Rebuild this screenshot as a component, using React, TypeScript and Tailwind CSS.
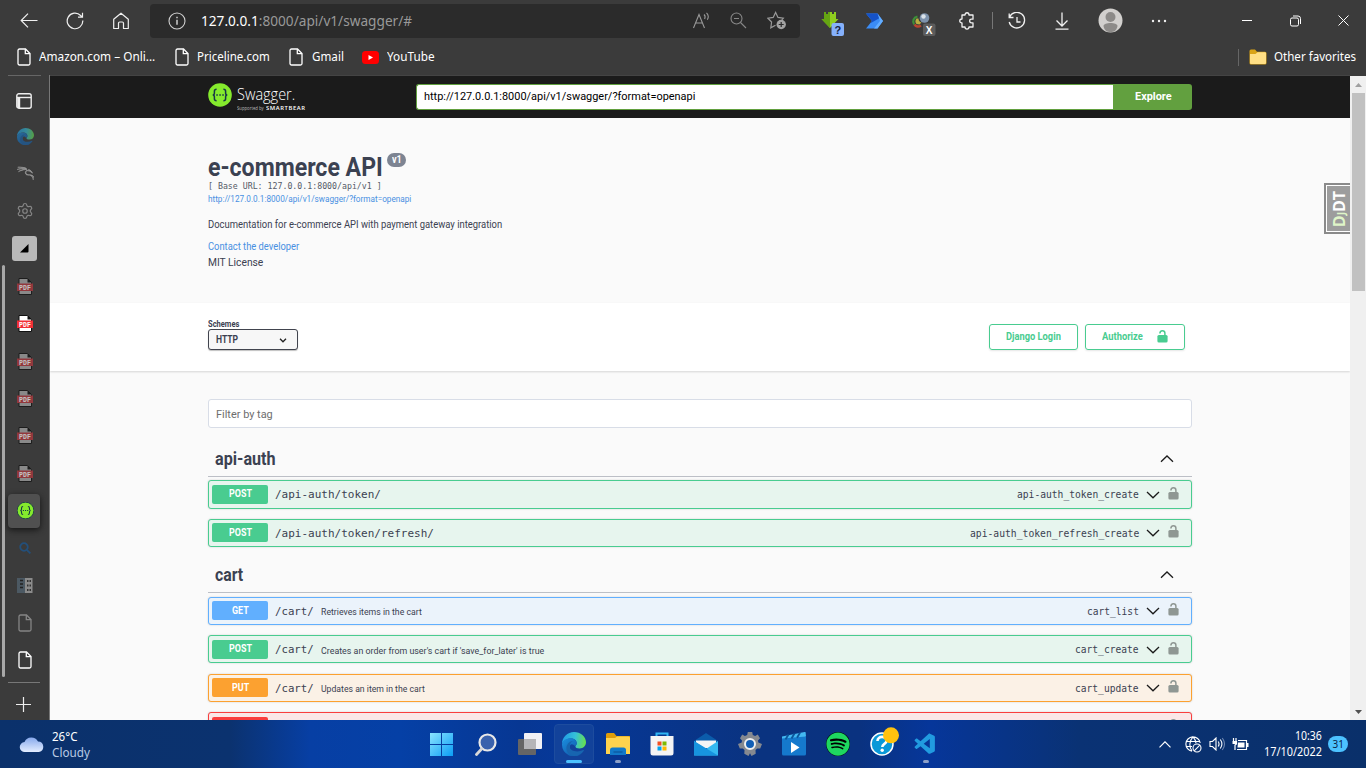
import { useLayoutEffect, useRef, type ReactNode } from "react";
import { FaSpotify } from "react-icons/fa";
import { SiKalilinux } from "react-icons/si";
import { VscVscode } from "react-icons/vsc";
import { Settings } from "lucide-react";

/* Single line of text that is condensed or widened to a given width. */
function Fit({ w, className = "", children }: { w: number; className?: string; children: ReactNode }) {
  const ref = useRef<HTMLSpanElement>(null);
  useLayoutEffect(() => {
    const el = ref.current;
    if (el && el.offsetWidth) el.style.transform = `scaleX(${w / el.offsetWidth})`;
  }, [w]);
  return (
    <span className={`block shrink-0 whitespace-nowrap ${className}`} style={{ width: w }}>
      <span ref={ref} className="inline-block origin-left align-top">{children}</span>
    </span>
  );
}

const FileIcon = ({ className = "" }: { className?: string }) => (
  <svg className={`shrink-0 ${className}`} width="14" height="18" viewBox="0 0 14 18" fill="none" stroke="currentColor" strokeWidth="1.3">
    <path d="M3 1h5.5L13 5.5V15.500a1.500 1.500 0 0 1-1.500 1.500H2.500a1.500 1.500 0 0 1-1.500-1.500V2.500a1.500 1.500 0 0 1 1.500-1.500Z" />
    <path d="M8.3 1.2V5.7H13" />
  </svg>
);

const SwaggerMark = ({ size, rim = "none" }: { size: number; rim?: string }) => (
  <svg className="shrink-0" width={size} height={size} viewBox="0 0 24 24">
    <circle cx="12" cy="12" r="11.8" fill="#85ea2d" stroke={rim} strokeWidth="1.2" />
    <g fill="none" stroke="#173647" strokeWidth="1.5">
      <path d="M8.6 6.3c-2 0-2.200.6-2.200 2v1.700c0 1.300-.5 2-1.700 2 1.200 0 1.700.7 1.700 2v1.700c0 1.400.2 2 2.200 2M15.400 6.300c2 0 2.200.6 2.200 2v1.700c0 1.300.5 2 1.700 2-1.200 0-1.700.7-1.700 2v1.700c0 1.400-.2 2-2.200 2" />
      <path d="M8.300 12h1.500M11.300 12h1.500M14.300 12h1.500" />
    </g>
  </svg>
);

const EdgeLogo = ({ size, id, className = "" }: { size: number; id: string; className?: string }) => (
  <svg className={className} width={size} height={size} viewBox="0 0 24 24">
    <defs>
      <linearGradient id={`${id}a`} x1="0" y1=".3" x2="1" y2=".4">
        <stop offset="0" stopColor="#1f9be6" />
        <stop offset=".55" stopColor="#35c1d8" />
        <stop offset="1" stopColor="#66e04f" />
      </linearGradient>
      <linearGradient id={`${id}b`} x1="0" y1="0" x2="1" y2="1">
        <stop offset="0" stopColor="#1b8fe0" />
        <stop offset="1" stopColor="#0f4f9e" />
      </linearGradient>
    </defs>
    <path d="M0 12C0 5 5.500 0 12 0s12 4.600 12 10.200c0 3.600-2.800 6.200-6.300 6.200-2.800 0-4.300-1-4.300-2 0-.8 1.300-1.300 1.300-3.200C14.700 8.500 12.300 6.500 9 6.500 4.500 6.500 1 9 0 12Z" fill={`url(#${id}a)`} />
    <path d="M0 12c.8-3.400 4-5.700 8.300-5.700 3.600 0 6.400 2.200 6.400 5 0 1.800-1.300 2.200-1.300 3.100-3-3.400-5.600-2.800-5.600.6 0 4.200 3.800 7.400 8.400 7.400 1.300 0 2.500-.3 3.500-.8A12 12 0 0 1 0 12Z" fill={`url(#${id}b)`} />
    <path d="M7.800 15c0-3 1.600-5.400 3.600-5.900-3.500-.3-7 2.900-7 7.400 0 4 3.600 7.300 8 7.500 3.700-.1 7.400-2 9.400-5.300.3-.6-.1-.9-.7-.6C15.500 20.900 7.800 19 7.800 15Z" fill="#1765b0" />
  </svg>
);

const PdfIcon = ({ active = false }: { active?: boolean }) => (
  <svg className={active ? "" : "opacity-70"} width="16" height="17" viewBox="0 0 16 17">
    <path d="M2 .5h8.500L14.500 4.500V16.500H2Z" fill={active ? "#fff" : "#aaa"} stroke="#111" />
    <path d="M10.500.5V4.500h4Z" fill="#111" />
    <rect y="5.500" width="16" height="7.500" fill={active ? "#f22f36" : "#b8383e"} />
    <text x="8" y="11.600" textAnchor="middle" fontFamily="Liberation Mono, monospace" fontWeight="700" fontSize="6.500" fill="#fff" textLength="12">PDF</text>
  </svg>
);

const Lock = ({ color }: { color: string }) => (
  <svg className="shrink-0" width="11" height="13" viewBox="0 0 11 13">
    <path d="M2.900 3.600C2.900 1.700 4 .8 5.400.8S7.900 1.700 7.900 3.300V6" fill="none" stroke={color} strokeWidth="1.500" />
    <rect x=".4" y="5" width="10.200" height="7.600" rx="1.500" fill={color} />
  </svg>
);

const Chevron = ({ up = false }: { up?: boolean }) => (
  <svg className="shrink-0" width="14" height="8" viewBox="0 0 14 8" fill="none" stroke="#1b1b1b" strokeWidth="1.300">
    <path d={up ? "M1 6.800 7 1 13 6.800" : "M1 1 7 6.800 13 1"} />
  </svg>
);

function Toolbar() {
  return (
    <div className="flex h-[41px] items-center text-[#f0f0f0]">
      <svg className="ml-5 shrink-0" width="18" height="18" viewBox="0 0 18 18" fill="none" stroke="currentColor" strokeWidth="1.200">
        <path d="M17.500 8.500H1.200M8 1.700 1.200 8.500 8 15.300" />
      </svg>
      <svg className="ml-[28px] shrink-0" width="18" height="18" viewBox="0 0 18 18" fill="none" stroke="currentColor" strokeWidth="1.200">
        <path d="M16.800 8.500A7.800 7.800 0 1 1 14.600 3.500L16.200 5M16.500.8V5.200H12" />
      </svg>
      <svg className="ml-[28px] shrink-0" width="18" height="18" viewBox="0 0 18 18" fill="none" stroke="currentColor" strokeWidth="1.200" strokeLinejoin="round">
        <path d="M1.700 7.300 9 1.200l7.300 6.100v9.200H11.500V11.200A1.200 1.200 0 0 0 10.300 10H7.700a1.200 1.200 0 0 0-1.200 1.200v5.300H1.700Z" />
      </svg>
      <div className="ml-[20px] flex h-[34px] w-[650px] shrink-0 items-center rounded-[4px] bg-[#2b2b2b] pl-[18px]">
        <svg className="shrink-0" width="18" height="18" viewBox="0 0 18 18" fill="none" stroke="#d0d0d0" strokeWidth="1.100">
          <circle cx="9" cy="9" r="8" />
          <path d="M9 7.800v5M9 4.800v1.500" strokeWidth="1.500" />
        </svg>
        <Fit w={211} className="mb-px ml-[15px] text-[15px] leading-[20px] text-[#999]">
          <span className="text-white">127.0.0.1</span>:8000/api/v1/swagger/#
        </Fit>
        <svg className="ml-[280px] shrink-0" width="19" height="18" viewBox="0 0 19 18" fill="none" stroke="#999" strokeWidth="1.100">
          <path d="M1.500 16 7 2.500 12.500 16M3.500 11h7M12 2.500c1.300 1.200 1.300 3 .6 4.500M14.500.8c2 2 2 5 .8 7" />
        </svg>
        <svg className="ml-[19px] shrink-0" width="17" height="17" viewBox="0 0 17 17" fill="none" stroke="#888" strokeWidth="1.100">
          <circle cx="6.500" cy="6.500" r="5.500" /><path d="M10.500 10.500 16 16M4 6.500h5" />
        </svg>
        <svg className="ml-[20px] shrink-0" width="20" height="19" viewBox="0 0 20 19" fill="none" stroke="#999" strokeWidth="1.200">
          <path d="M8.500 14.200 3.800 16.800 4.600 11 .9 7.200l5.300-.8L8.600 1.400 11 6.400l5.300.8-1.500 1.600" />
          <circle cx="14.200" cy="13.500" r="4.700" fill="#a3a3a3" stroke="none" />
          <path d="M14.200 11v5M11.700 13.500h5" stroke="#2b2b2b" />
        </svg>
      </div>
      <svg className="mt-[6px] ml-[20px] shrink-0" width="25" height="26" viewBox="0 0 25 26">
        <path d="M4 1h2v2h2V1h4v2h2V1h2v7h2.500L10 17 1.500 8H4Z" fill="#8fce1f" />
        <path d="M4 1h2v2h2V1h2v16L1.500 8H4Z" fill="#65a512" />
        <rect x="11.500" y="12" width="12.500" height="13" rx="2" fill="#86b1fb" />
        <text x="17.800" y="22.500" textAnchor="middle" fontSize="11" fontWeight="700" fontFamily="Liberation Sans, sans-serif" fill="#15233f">?</text>
      </svg>
      <svg className="ml-[20px] shrink-0" width="20" height="16" viewBox="0 0 20 16">
        <path d="M1 .5h11.500L18 8l-5.500 7.500H1L7 8Z" fill="#3b8cf5" />
        <path d="M1 .5h11.500L15.500 4.500 5.500 10.300 7 8Z" fill="#1552c8" />
        <path d="M12.500.5 18 8l-5.500 7.500H9L15 8Z" fill="#63adff" />
      </svg>
      <svg className="mt-[6px] ml-[26px] shrink-0" width="26" height="26" viewBox="0 0 26 26">
        <circle cx="13.500" cy="7" r="4.800" fill="#7d93ad" /><circle cx="12.500" cy="5.500" r="2.200" fill="#dbe3ea" />
        <path d="M6.500 5.500C2.500 6.500 1 10 3.200 13.500" stroke="#3d8f38" strokeWidth="2.200" fill="none" />
        <path d="M3.500 13.500c1.500 2.200 4 2.800 6.500 1" stroke="#b8452f" strokeWidth="2.400" fill="none" />
        <path d="M5.500 7.500c-1.500 2-1.500 4 0 5.500l3 .5 2-2c-2-.5-3-2-3-4Z" fill="#b9ae40" />
        <rect x="12" y="12.500" width="12.500" height="12.500" rx="2" fill="#5c5c5c" />
        <text x="18.200" y="22.500" textAnchor="middle" fontSize="10" fontWeight="700" fontFamily="Liberation Sans, sans-serif" fill="#fff">X</text>
      </svg>
      <svg className="ml-[21px] shrink-0" width="18" height="18" viewBox="0 0 18 18" fill="none" stroke="currentColor" strokeWidth="1.300" strokeLinejoin="round">
        <path d="M4 3h3c0-3 4-3 4 0h4v4.200h-1.500c-2.500 0-2.500 3.600 0 3.600H15V15h-4c0 2.800-4 2.800-4 0H4v-4C1 11 1 7 4 7Z" />
      </svg>
      <div className="ml-[16px] h-[17px] w-px bg-[#777]" />
      <svg className="ml-[15px] shrink-0" width="18" height="18" viewBox="0 0 18 18" fill="none" stroke="currentColor" strokeWidth="1.300">
        <path d="M1.200 1.500V5.500H5.500M1.500 5.300A7.800 7.800 0 1 1 1.200 10M9 5v5h3.500" />
      </svg>
      <svg className="ml-[28px] shrink-0" width="16" height="18" viewBox="0 0 16 18" fill="none" stroke="currentColor" strokeWidth="1.300">
        <path d="M8 .5v13M2.500 8.500 8 14l5.500-5.500M1.500 17.200h13" />
      </svg>
      <svg className="ml-[28px] shrink-0" width="25" height="25" viewBox="0 0 25 25">
        <circle cx="12.500" cy="12.500" r="12" fill="#d2d0ce" /><circle cx="12.500" cy="9" r="5" fill="#8d8b89" />
        <path d="M5.500 18c0-4 14-4 14 0-1 5-3.500 6-7 6s-6-1-7-6Z" fill="#8d8b89" />
      </svg>
      <svg className="ml-[28px] shrink-0" width="16" height="4" viewBox="0 0 16 4" fill="currentColor">
        <circle cx="2" cy="2" r="1.200" /><circle cx="8" cy="2" r="1.200" /><circle cx="14" cy="2" r="1.200" />
      </svg>
      <div className="ml-[75px] h-px w-[10px] bg-white" />
      <svg className="ml-[38px] shrink-0" width="11" height="12" viewBox="0 0 11 12" fill="none" stroke="#fff">
        <rect x=".5" y="3" width="8" height="8" rx="1.500" /><path d="M3 1h5a2.500 2.500 0 0 1 2.500 2.500V9" />
      </svg>
      <svg className="ml-[37px] shrink-0" width="11" height="11" viewBox="0 0 11 11" stroke="#fff"><path d="m.5.5 10 10m0-10-10 10" /></svg>
    </div>
  );
}

function Bookmarks() {
  return (
    <div className="flex h-[34px] items-center pb-[2px] text-[12px] leading-[16px] text-white">
      <FileIcon className="ml-[17px]" />
      <Fit w={116} className="ml-[8px]">Amazon.com – Onli...</Fit>
      <FileIcon className="ml-[20px]" />
      <Fit w={73} className="ml-[8px]">Priceline.com</Fit>
      <FileIcon className="ml-[19px]" />
      <Fit w={32} className="ml-[9px]">Gmail</Fit>
      <svg className="ml-[18px] shrink-0" width="17" height="13" viewBox="0 0 17 13"><rect width="17" height="13" rx="3.500" fill="#f00" /><path d="m6.500 4 4.500 2.500L6.500 9Z" fill="#fff" /></svg>
      <Fit w={48} className="ml-[8px]">YouTube</Fit>
      <div className="ml-auto h-[17px] w-px bg-[#666]" />
      <svg className="ml-[10px] shrink-0" width="18" height="16" viewBox="0 0 18 16">
        <path d="M.5 2A1.500 1.500 0 0 1 2 .5h4L8 2.800h8A1.500 1.500 0 0 1 17.500 4.300V14a1.500 1.500 0 0 1-1.500 1.500H2A1.500 1.500 0 0 1 .5 14Z" fill="#d9a316" />
        <path d="M1 5h5.500L8.500 3.300H16a1 1 0 0 1 1 1V14a1 1 0 0 1-1 1H2a1 1 0 0 1-1-1Z" fill="#ffdf85" />
      </svg>
      <Fit w={82} className="mr-[10px] ml-[7px]">Other favorites</Fit>
    </div>
  );
}

const Tab = ({ children }: { children: ReactNode }) => (
  <div className="flex h-[37.43px] shrink-0 items-center justify-center pl-px">{children}</div>
);

function Sidebar() {
  return (
    <div className="relative flex w-[50px] shrink-0 flex-col border-r border-[#777] bg-[#3b3b3b] text-white">
      <div className="ml-2 h-px w-[33px] shrink-0 bg-[#666]" />
      <div className="flex h-[41.8px] shrink-0 items-center justify-center pt-[8px] pr-px">
        <svg width="16" height="16" viewBox="0 0 16 16" fill="none" stroke="#eee" strokeWidth="1.400">
          <rect x=".8" y=".8" width="14.400" height="14.400" rx="2" /><path d="M1 4.500h14" /><path d="M2.700 5v10" strokeWidth="3" />
        </svg>
      </div>
      <Tab><EdgeLogo size={17} id="side" className="opacity-60" /></Tab>
      <Tab><SiKalilinux size={17} color="#999" stroke="#999" strokeWidth={0.9} /></Tab>
      <Tab><Settings size={18} strokeWidth={1.600} color="#858585" /></Tab>
      <Tab>
        <div className="mr-[2px] flex size-[25px] items-center justify-center rounded-[3px] bg-[#b9b9b9]">
          <svg width="9" height="9" viewBox="0 0 9 9"><path d="M8.500 0v7.500a1 1 0 0 1-1 1H0Z" /></svg>
        </div>
      </Tab>
      <Tab><PdfIcon /></Tab>
      <Tab><PdfIcon active /></Tab>
      <Tab><PdfIcon /></Tab>
      <Tab><PdfIcon /></Tab>
      <Tab><PdfIcon /></Tab>
      <Tab><PdfIcon /></Tab>
      <Tab>
        <div className="mr-[2px] flex h-[34px] w-[32px] items-center justify-center rounded-[4px] bg-[#505050] pl-[2px] shadow-[0_2px_6px_#151515]"><SwaggerMark size={17} rim="#173647" /></div>
      </Tab>
      <Tab><svg width="12" height="12" viewBox="0 0 12 12" fill="none" stroke="#234f7a" strokeWidth="1.800"><circle cx="5" cy="5" r="3.800" /><path d="m7.800 7.800 3.600 3.600" /></svg></Tab>
      <Tab>
        <svg width="16" height="15" viewBox="0 0 16 15">
          <rect width="8" height="15" fill="#4c5963" /><rect x="8" width="7.500" height="15" fill="#8b8b8b" />
          <path d="M3 2.500h3M3 6h3M3 9.500h3" stroke="#222" strokeWidth="1.500" /><path d="M10 3h4M10 7.500h4M10 12h4" stroke="#333" strokeWidth="2" strokeDasharray="1.500 1" />
        </svg>
      </Tab>
      <Tab><FileIcon className="text-[#858585]" /></Tab>
      <Tab><FileIcon /></Tab>
      <div className="mt-[3px] ml-2 h-px w-[32px] shrink-0 bg-[#777]" />
      <svg className="mt-[14px] ml-4 shrink-0" width="15" height="15" viewBox="0 0 15 15" stroke="#eee" strokeWidth="1.200"><path d="M7.500 0v15M0 7.500h15" /></svg>
      <div className="absolute top-[190px] left-[2px] h-[412px] w-[3px] rounded bg-[#a8a8a8]" />
    </div>
  );
}

type Op = { method?: string; path?: string; pw?: number; desc?: string; dw?: number; id?: string; iw?: number; box: string; badge: string; mw?: number };

const GREEN = "border-[#49cc90] bg-[#e7f5ee]";
const authOps: Op[] = [
  { method: "POST", mw: 23, path: "/api-auth/token/", pw: 106, id: "api-auth_token_create", iw: 122, box: GREEN, badge: "bg-[#49cc90]" },
  { method: "POST", mw: 23, path: "/api-auth/token/refresh/", pw: 159, id: "api-auth_token_refresh_create", iw: 169, box: GREEN, badge: "bg-[#49cc90]" },
];
const cartOps: Op[] = [
  { method: "GET", mw: 17, path: "/cart/", pw: 39, desc: "Retrieves items in the cart", dw: 101, id: "cart_list", iw: 52, box: "border-[#61affe] bg-[#ebf3fb]", badge: "bg-[#61affe]" },
  { method: "POST", mw: 23, path: "/cart/", pw: 39, desc: "Creates an order from user's cart if 'save_for_later' is true", dw: 223, id: "cart_create", iw: 64, box: GREEN, badge: "bg-[#49cc90]" },
  { method: "PUT", mw: 17, path: "/cart/", pw: 39, desc: "Updates an item in the cart", dw: 104, id: "cart_update", iw: 64, box: "border-[#fca130] bg-[#fbf1e6]", badge: "bg-[#fca130]" },
  { box: "border-[#f93e3e] bg-[#fae7e7]", badge: "bg-[#f93e3e]" },
];

const OpRow = ({ op }: { op: Op }) => (
  <div className={`mb-[10.25px] flex h-[28.25px] shrink-0 items-center rounded-[3px] border pl-[3px] shadow-[0_0_2px_rgba(0,0,0,.19)] ${op.box}`}>
    <div className={`flex h-[19px] w-[56px] items-center justify-center rounded-[2px] text-[10.5px] font-bold text-white ${op.badge}`}>
      {op.method && <Fit w={op.mw ?? 23} className="leading-[14px]">{op.method}</Fit>}
    </div>
    {op.path && <Fit w={op.pw ?? 39} className="ml-[7px] pt-[2px] font-['DejaVu_Sans_Mono',monospace] text-[11px] leading-[14px]">{op.path}</Fit>}
    {op.desc && <Fit w={op.dw ?? 100} className="ml-[7px] pt-[2px] text-[9.5px] leading-[13px]">{op.desc}</Fit>}
    {op.id && <Fit w={op.iw ?? 64} className="ml-auto pt-[1px] font-['DejaVu_Sans_Mono',monospace] text-[10.5px] leading-[13px]">{op.id}</Fit>}
    <div className={`flex w-[45px] items-center pt-px ${op.id ? "ml-[7px]" : "ml-auto"}`}>
      <Chevron />
      <div className="mb-[3px] ml-[8px]"><Lock color="#8f9793" /></div>
    </div>
  </div>
);

const Group = ({ name, w, ops, className }: { name: string; w: number; ops: Op[]; className: string }) => (
  <section className={className}>
    <div className="flex h-[35px] items-center justify-between border-b border-[#bcbfc6] pr-[18px] pl-[6.5px]">
      <Fit w={w} className="text-[17.5px] leading-[22px] font-bold">{name}</Fit>
      <div className="pb-px"><Chevron up /></div>
    </div>
    <div className="pt-[3.3px]">{ops.map((op, i) => <OpRow key={i} op={op} />)}</div>
  </section>
);

function SwaggerPage() {
  return (
    <main className="relative flex min-w-0 flex-1 flex-col overflow-hidden bg-[#fafafa] font-[Roboto,sans-serif] text-[#3b4151]">
      <header className="flex h-[43px] shrink-0 items-center border-t border-[#444] bg-[#1b1b1b] pr-[158px] pl-[158px]">
        <div className="flex w-[208px] items-start">
          <SwaggerMark size={24} />
          <div className="ml-[4.500px] pt-[4px] font-['Open_Sans',sans-serif] text-white">
            <Fit w={58} className="h-[18px] text-[17px] leading-[14px] font-light">Swagger.</Fit>
            <div className="flex h-[7px] items-center gap-[2px]">
              <Fit w={27} className="text-[5.5px] leading-[7px] text-[#bbb]">Supported by</Fit>
              <Fit w={40} className="text-[6px] leading-[7px] font-semibold tracking-widest">SMARTBEAR</Fit>
            </div>
          </div>
        </div>
        <div className="flex h-[26px] flex-1">
          <div className="flex flex-1 items-center rounded-l-[3px] border border-r-0 border-[#62a03f] bg-white pb-[2px] pl-[7px] text-black">
            <Fit w={271} className="text-[11.5px] leading-[15px]">http://127.0.0.1:8000/api/v1/swagger/?format=openapi</Fit>
          </div>
          <div className="flex w-[79px] items-center justify-center rounded-r-[3px] bg-[#62a03f] pb-[2px] pl-px text-white">
            <Fit w={37} className="text-[11.5px] leading-[15px] font-bold">Explore</Fit>
          </div>
        </div>
      </header>

      <section className="h-[185px] shrink-0 pt-[34px] pl-[158px]">
        <div className="flex h-[28px] items-start">
          <Fit w={175} className="text-[26px] leading-[31px] font-bold">e-commerce API</Fit>
          <div className="mt-[1px] ml-[4px] flex h-[14px] w-[19px] items-center justify-center rounded-full bg-[#7d8492] text-white">
            <Fit w={10} className="text-[10px] leading-[12px] font-bold">v1</Fit>
          </div>
        </div>
        <Fit w={174} className="h-[13px] font-['DejaVu_Sans_Mono',monospace] text-[9px] leading-[12px] text-[#555a68]">[ Base URL: 127.0.0.1:8000/api/v1 ]</Fit>
        <Fit w={203} className="h-[25px] text-[9px] leading-[12px] text-[#4990e2]">http://127.0.0.1:8000/api/v1/swagger/?format=openapi</Fit>
        <Fit w={294} className="h-[22px] text-[10.5px] leading-[13px]">Documentation for e-commerce API with payment gateway integration</Fit>
        <Fit w={91} className="h-[16px] text-[10.5px] leading-[14px] text-[#4990e2]">Contact the developer</Fit>
        <Fit w={55} className="text-[11px] leading-[13px]">MIT License</Fit>
      </section>

      <section className="flex h-[68px] shrink-0 items-start bg-white pr-[165px] pl-[158px] shadow-[0_1px_2px_rgba(0,0,0,.15)]">
        <div className="pt-[16px]">
          <Fit w={31} className="h-[10px] text-[9px] leading-[11px] font-bold">Schemes</Fit>
          <div className="flex h-[21px] w-[90px] items-center justify-between rounded-[3px] border border-[#41444e] bg-[#f7f7f7] pr-[10px] pl-[7px] shadow-[0_1px_1px_rgba(0,0,0,.25)]">
            <Fit w={22} className="text-[10.5px] leading-[13px] font-bold">HTTP</Fit>
            <svg className="mt-px" width="8" height="5" viewBox="0 0 8 5" fill="none" stroke="#222" strokeWidth="1.300"><path d="m1 .8 3 3 3-3" /></svg>
          </div>
        </div>
        <div className="mt-[21px] ml-auto flex gap-[7px] text-[10.5px] font-bold text-[#49cc90]">
          <div className="flex h-[26px] w-[89px] items-center justify-center rounded-[3px] border border-[#49cc90] pb-px shadow-[0_1px_2px_rgba(0,0,0,.1)]">
            <Fit w={55} className="leading-[13px]">Django Login</Fit>
          </div>
          <div className="flex h-[26px] w-[100px] items-center justify-between rounded-[3px] border border-[#49cc90] pr-[16px] pb-px pl-[16px] shadow-[0_1px_2px_rgba(0,0,0,.1)]">
            <Fit w={41} className="leading-[13px]">Authorize</Fit>
            <Lock color="#49cc90" />
          </div>
        </div>
      </section>

      <div className="flex-1 px-[158px] pt-[28px]">
        <div className="flex h-[29px] items-center rounded-[3px] border border-[#d8dde7] bg-white pl-[7px]">
          <Fit w={57} className="text-[11.5px] leading-[14px] text-[#6e6e6e]">Filter by tag</Fit>
        </div>
        <Group name="api-auth" w={61} ops={authOps} className="pt-[14px]" />
        <Group name="cart" w={28} ops={cartOps} className="pt-[1.1px]" />
      </div>

      <div className="absolute top-[108px] right-0 h-[51px] w-[26px] border-2 border-r-0 border-[#8a8a8a] bg-white p-px pr-0">
        <div className="flex h-full items-center justify-center bg-[#9d9d9d] pl-[3px]">
          <div className="-rotate-90 font-['Open_Sans',sans-serif] text-[16px] leading-[16px] font-bold whitespace-nowrap text-white">
            <span className="text-[#dff5c8]">D<span className="text-[10px]">J</span></span>DT
          </div>
        </div>
      </div>
    </main>
  );
}

const Slot = ({ children, mark = false }: { children: ReactNode; mark?: boolean }) => (
  <div className="relative flex h-12 w-11 shrink-0 items-center justify-center">
    {children}
    {mark && <div className="absolute bottom-[5px] h-[3px] w-[6px] rounded bg-[#8ca0c8]" />}
  </div>
);

function Taskbar() {
  return (
    <footer className="flex h-12 shrink-0 items-center bg-[linear-gradient(90deg,#0b316b_0,#0b326f_230px,#073fa4_310px,#0540a6_400px,#073793_520px,#063899_560px,#0a3380_760px,#0a3280_860px,#06369a_930px,#0a3274_1080px,#0a306a_100%)] text-white">
      <svg className="ml-[19px] shrink-0" width="26" height="18" viewBox="0 0 26 18">
        <defs><linearGradient id="cloud" x1="0" y1="0" x2="0" y2="1"><stop offset="0" stopColor="#87a9ec" /><stop offset="1" stopColor="#e3edff" /></linearGradient></defs>
        <path d="M6 17a5 5 0 0 1-.5-10A7.500 7.500 0 0 1 19 6.500 5.300 5.300 0 0 1 20 17Z" fill="url(#cloud)" />
      </svg>
      <div className="ml-[6.500px] w-[368px] pt-px text-[12px] leading-[16px]">
        <Fit w={25}>26°C</Fit>
        <Fit w={38} className="text-[#b9cae4]">Cloudy</Fit>
      </div>
      <Slot>
        <svg width="23" height="23" viewBox="0 0 23 23">
          <defs><linearGradient id="win" x1="0" y1="0" x2="1" y2="1"><stop offset="0" stopColor="#8be4ff" /><stop offset="1" stopColor="#0a9df5" /></linearGradient></defs>
          <path d="M0 0h11v11H0ZM12 0h11v11H12ZM0 12h11v11H0ZM12 12h11v11H12Z" fill="url(#win)" />
        </svg>
      </Slot>
      <Slot><svg width="22" height="23" viewBox="0 0 22 23"><circle cx="12.500" cy="9.500" r="8" fill="#3a62ad" stroke="#e8e8e8" strokeWidth="2.200" /><path d="M6.800 15.800 1.500 21.500" stroke="#d8d8d8" strokeWidth="2.800" strokeLinecap="round" /></svg></Slot>
      <Slot><svg width="24" height="22" viewBox="0 0 24 22"><rect x="6" width="18" height="16" rx="1" fill="#f1f1f5" /><rect y="6" width="18" height="16" rx="1" fill="#656565" /><path d="M6 6h12v10H6Z" fill="#b5b5b8" /></svg></Slot>
      <Slot>
        <div className="flex size-10 items-center justify-center rounded-[4px] border border-[#1d4c9e] bg-[#12429a]"><EdgeLogo size={24} id="task" /></div>
        <div className="absolute bottom-[5px] h-[3px] w-4 rounded bg-[#4cc2ff]" />
      </Slot>
      <Slot mark>
        <svg width="24" height="22" viewBox="0 0 24 22">
          <path d="M0 1.500A1.500 1.500 0 0 1 1.500 0H8l2.500 3H24v6H0Z" fill="#df9d0a" />
          <path d="M0 5h9l2-1.500h11.500A1.500 1.500 0 0 1 24 5v16H0Z" fill="#ffd34e" />
          <path d="M4 22v-5a2.500 2.500 0 0 1 2.500-2.500h11A2.500 2.500 0 0 1 20 17v5Z" fill="#1279c9" /><path d="M7.500 19h9" stroke="#0a4f93" />
        </svg>
      </Slot>
      <Slot>
        <svg width="24" height="24" viewBox="0 0 24 24">
          <path d="M6.500 5V1.500h11V5" fill="none" stroke="#2fb5f3" strokeWidth="2" /><path d="M.5 4h23v17a2.500 2.500 0 0 1-2.500 2.500H3A2.500 2.500 0 0 1 .5 21Z" fill="#f4f4f4" />
          <path d="M7.500 9.500h4v4h-4Z" fill="#f25022" /><path d="M12.500 9.500h4v4h-4Z" fill="#7fba00" /><path d="M7.500 14.500h4v4h-4Z" fill="#00a4ef" /><path d="M12.500 14.500h4v4h-4Z" fill="#ffb900" />
        </svg>
      </Slot>
      <Slot>
        <svg width="24" height="23" viewBox="0 0 24 23">
          <path d="M0 8 12 0l12 8v5H0Z" fill="#0b5cab" /><path d="M2 7.500h20V15H2Z" fill="#f5f5f5" /><path d="M0 8v14.500h24V8L12 16Z" fill="#35b9f1" /><path d="m0 8 24 14.500H1.500A1.500 1.500 0 0 1 0 21Z" fill="#1794df" />
        </svg>
      </Slot>
      <Slot>
        <svg width="24" height="24" viewBox="0 0 24 24">
          <path d="m9.800 0h4.400l.6 3 2.300 1 2.700-1.600 2.200 3.800-2 2.200.3 2.200L24 12l-1.800 4.400-3 .1-1.700 1.600.2 3.600L13.500 24 12 21.200 10.500 24l-4.200-2.200.2-3.700-1.700-1.600-3-.1L0 12l3.700-1.400L4 8.400 2 6.200l2.200-3.800L6.900 4l2.300-1Z" fill="#858990" />
          <circle cx="12" cy="12" r="5" fill="#125eb5" stroke="#f0f0f0" strokeWidth="2" />
        </svg>
      </Slot>
      <Slot>
        <svg width="24" height="24" viewBox="0 0 24 24">
          <path d="M0 10h24v12a1.500 1.500 0 0 1-1.500 1.500h-21A1.500 1.500 0 0 1 0 22Z" fill="#1579cd" />
          <path d="M0 4.500 22.500 0a1 1 0 0 1 1.200 1L24 4.500 17 8 0 10.500Z" fill="#43b8f1" /><path d="M0 6.500 24 4.500V11H0Z" fill="#1579cd" />
          <path d="m6.500 2.500-3 5M12.500 1.500l-3 5M18 .8l-3 5" stroke="#0c569c" strokeWidth="1.800" /><path d="M9 10 17.500 15.500 9 21Z" fill="#fff" />
        </svg>
      </Slot>
      <Slot><div className="rounded-full bg-black"><FaSpotify size={24} color="#1ed760" /></div></Slot>
      <Slot>
        <svg className="overflow-visible" width="24" height="24" viewBox="0 0 24 24">
          <circle cx="12" cy="12" r="11" fill="#0a98d8" stroke="#fff" strokeWidth="1.500" />
          <path d="M7.500 9c0-5.500 9-5.500 9-.3 0 3.300-4.200 3-4.200 6.300" fill="none" stroke="#fff" strokeWidth="2.600" /><circle cx="12.200" cy="18.300" r="1.700" fill="#fff" />
          <circle cx="21" cy="3.300" r="8" fill="#ffc20e" />
        </svg>
      </Slot>
      <Slot mark><VscVscode size={25} color="#219be0" /></Slot>
      <svg className="ml-[211.500px] shrink-0" width="12" height="7" viewBox="0 0 12 7" fill="none" stroke="#fff" strokeWidth="1.200"><path d="M.5 6.300 6 .8l5.500 5.500" /></svg>
      <svg className="ml-[14px] shrink-0" width="17" height="17" viewBox="0 0 17 17" fill="none" stroke="#fff" strokeWidth="1.100">
        <path d="M7 15.200A7.200 7.200 0 1 1 15.200 7M1 5.500h14M1 10.500h6M7 15C4 11 4 5 8 .8 10 3 11 5 11 7.200" /><circle cx="12" cy="12" r="4" /><path d="m9.200 14.800 5.600-5.600" />
      </svg>
      <svg className="ml-[7px] shrink-0" width="17" height="14" viewBox="0 0 17 14" fill="none" stroke="#fff" strokeWidth="1.100">
        <path d="M1 4.500h2.500L7 1v12L3.500 9.500H1ZM9.200 4.500c1 1.500 1 3.500 0 5M11.300 2.500c2 2.800 2 6.200 0 9" /><path d="M13.300 1c3 4 3 8 0 12" stroke="#6d86b0" />
      </svg>
      <svg className="ml-[6px] shrink-0" width="17" height="13" viewBox="0 0 17 13">
        <path d="M1.500 0v3M4 0v3M1 3.500h3.500V6L3 7v5" fill="none" stroke="#fff" strokeWidth="1.200" /><path d="M.5 3h4.500v3H.5Z" fill="#fff" />
        <path d="M6 2.500h8.500v9H5" fill="none" stroke="#fff" strokeWidth="1.200" /><path d="M6 4.500h6.500v5H5.500ZM15 5h1.500v4H15Z" fill="#fff" />
      </svg>
      <div className="ml-auto flex flex-col items-end text-[12px] leading-[16px]">
        <Fit w={27}>10:36</Fit>
        <Fit w={58}>17/10/2022</Fit>
      </div>
      <div className="mr-[18px] ml-[6px] flex h-4 w-5 items-center justify-center rounded-full bg-[#4cc2ff] text-[#0b2447]"><Fit w={11} className="text-[10px] leading-[14px]">31</Fit></div>
    </footer>
  );
}

export default function App() {
  return (
    <div className="flex h-[768px] w-[1366px] flex-col overflow-hidden bg-[#3b3b3b] font-['Noto_Sans',sans-serif]">
      <Toolbar />
      <Bookmarks />
      <div className="flex min-h-0 flex-1">
        <Sidebar />
        <SwaggerPage />
        <div className="mt-px flex w-4 shrink-0 flex-col items-center justify-between bg-[#f0f0f0] pb-[6px]">
          <div className="flex flex-col items-center pt-[7px]">
            <svg width="7" height="4" viewBox="0 0 7 4"><path d="M0 4 3.500 0 7 4Z" fill="#a0a0a0" /></svg>
            <div className="mt-[6px] ml-px h-[198px] w-[13px] bg-[#c1c1c1]" />
          </div>
          <svg width="7" height="4" viewBox="0 0 7 4"><path d="M0 0 3.500 4 7 0Z" fill="#505050" /></svg>
        </div>
      </div>
      <Taskbar />
    </div>
  );
}
